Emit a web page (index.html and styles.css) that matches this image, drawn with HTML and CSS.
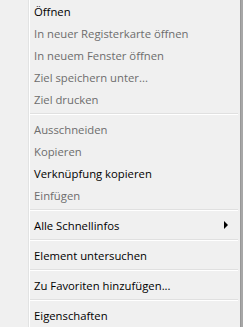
FILE: index.html
```html
<!DOCTYPE html>
<html lang="de">
<head>
    <meta charset="UTF-8">
    <meta name="viewport" content="width=device-width, initial-scale=1.0">
    <title>Kontextmenü</title>
    <link rel="stylesheet" href="styles.css">
</head>
<body>
    <div class="menu">
        <div class="gutter"></div>
        <ul class="list">
            <li class="item">Öffnen</li>
            <li class="item disabled">In neuer Registerkarte öffnen</li>
            <li class="item disabled">In neuem Fenster öffnen</li>
            <li class="item disabled">Ziel speichern unter...</li>
            <li class="item disabled">Ziel drucken</li>
            <li class="separator"></li>
            <li class="item disabled">Ausschneiden</li>
            <li class="item disabled">Kopieren</li>
            <li class="item">Verknüpfung kopieren</li>
            <li class="item disabled">Einfügen</li>
            <li class="separator"></li>
            <li class="item submenu">Alle Schnellinfos<span class="arrow"></span></li>
            <li class="separator"></li>
            <li class="item">Element untersuchen</li>
            <li class="separator"></li>
            <li class="item">Zu Favoriten hinzufügen...</li>
            <li class="separator"></li>
            <li class="item">Eigenschaften</li>
        </ul>
        <div class="edge"></div>
    </div>
</body>
</html>
```

FILE: styles.css
```css
/* Reset */
* {
  box-sizing: border-box;
  margin: 0;
  padding: 0;
}

body {
  font-family: "Open Sans", "Noto Sans", Arial, sans-serif;
  font-size: 11.3px;
  background-color: #f0f0f0;
}

/* Menu frame */
.menu {
  display: flex;
  width: 243px;
  height: 327px;
  background-color: #f0f0f0;
}

.gutter {
  width: 29px;
  border-right: 1px solid #e2e3e3;
}

.list {
  flex: 1;
  list-style: none;
  border-left: 1px solid #ffffff;
}

.edge {
  width: 3px;
  border-left: 1px solid #979797;
  background-color: #a7a7a7;
}

/* Items */
.item {
  display: flex;
  align-items: center;
  justify-content: space-between;
  height: 22px;
  padding-left: 4px;
  padding-right: 12px;
  color: #000;
  white-space: nowrap;
}

.item.disabled {
  color: #6d6d6d;
}

.arrow {
  width: 0;
  height: 0;
  border-top: 4px solid transparent;
  border-bottom: 4px solid transparent;
  border-left: 4px solid #000;
}

.separator {
  height: 2px;
  margin: 3px 2px 3px 0;
  border-top: 1px solid #e0e0e0;
  border-bottom: 1px solid #ffffff;
}
```
